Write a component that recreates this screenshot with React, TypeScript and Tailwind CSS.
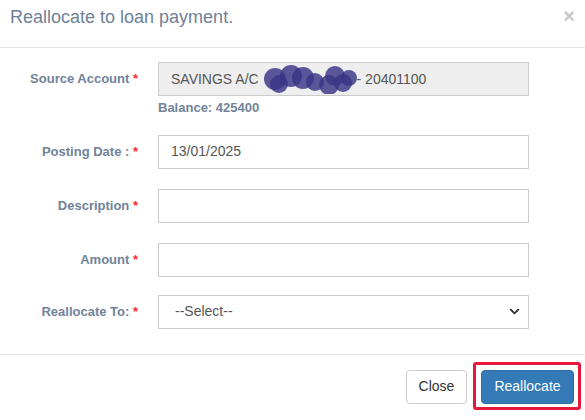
import React from 'react';
import { ChevronDown } from 'lucide-react';

const font = { fontFamily: '"Liberation Sans", Arial, sans-serif' };

function Label({ text }: { text: string }) {
  return (
    <div className="w-[158px] shrink-0 pr-[20px] text-right text-[13px] font-bold text-[#70839a]">
      {text} <span className="text-[#ff2b2b]">*</span>
    </div>
  );
}

function Scribble() {
  return (
    <svg width="94" height="30" viewBox="0 0 94 30" className="inline-block align-middle -my-2">
      <g fill="#3a3586" fillOpacity="0.82">
        <circle cx="12" cy="15" r="11" />
        <circle cx="16" cy="20" r="9" />
        <circle cx="28" cy="12" r="11" />
        <circle cx="40" cy="14" r="11" />
        <circle cx="52" cy="18" r="9" />
        <circle cx="66" cy="21" r="10" />
        <circle cx="72" cy="12" r="10" />
        <circle cx="80" cy="19" r="9" />
        <circle cx="86" cy="14" r="8" />
      </g>
    </svg>
  );
}

export default function App() {
  return (
    <div className="w-[585px] h-[420px] bg-white overflow-hidden" style={font}>
      <div className="h-[48px] border-b border-[#e5e5e5] flex items-center justify-between pl-[10px] pr-[10px]">
        <h4 className="text-[18px] text-[#6f8196] -mt-[13px]">Reallocate to loan payment.</h4>
        <span className="text-[20px] font-bold text-[#c8c8c8] -mt-[16px]">×</span>
      </div>

      <div className="pt-[14px]">
        <div className="flex">
          <div className="h-[34px] flex items-center justify-end">
            <Label text="Source Account" />
          </div>
          <div>
            <div className="w-[371px] h-[34px] border border-[#cccccc] bg-[#eeeeee] px-[12px] flex items-center text-[14px] text-[#555555] whitespace-nowrap">
              SAVINGS A/C&nbsp;<Scribble />- 20401100
            </div>
            <div className="mt-[2px] text-[13px] font-bold text-[#70839a]">Balance: 425400</div>
          </div>
        </div>

        <div className="flex items-center mt-[17px]">
          <div className="w-[158px] shrink-0 pr-[20px] text-right text-[13px] font-bold text-[#70839a]">
            Posting Date : <span className="text-[#ff2b2b]">*</span>
          </div>
          <div className="w-[371px] h-[34px] border border-[#cccccc] px-[12px] flex items-center text-[14px] text-[#555555]">
            13/01/2025
          </div>
        </div>

        <div className="flex items-center mt-[20px]">
          <Label text="Description" />
          <div className="w-[371px] h-[34px] border border-[#cccccc]" />
        </div>

        <div className="flex items-center mt-[20px]">
          <Label text="Amount" />
          <div className="w-[371px] h-[34px] border border-[#cccccc]" />
        </div>

        <div className="flex items-center mt-[18px]">
          <div className="w-[158px] shrink-0 pr-[20px] text-right text-[13px] font-bold text-[#70839a]">
            Reallocate To: <span className="text-[#ff2b2b]">*</span>
          </div>
          <div className="w-[371px] h-[34px] border border-[#cccccc] pl-[16px] pr-[6px] flex items-center justify-between text-[14px] text-[#555555]">
            <span>--Select--</span>
            <ChevronDown size={15} strokeWidth={3} className="text-[#333]" />
          </div>
        </div>
      </div>

      <div className="mt-[25px] border-t border-[#e5e5e5] pt-[15px] pr-[11px] flex justify-end gap-[14px]">
        <button className="w-[61px] h-[34px] rounded-[4px] border border-[#cccccc] bg-white text-[14px] text-[#333333]">
          Close
        </button>
        <div className="relative">
          <button className="w-[93px] h-[34px] rounded-[4px] border border-[#2e6da4] bg-[#337ab7] text-[14px] text-white">
            Reallocate
          </button>
          <span className="absolute left-[-8px] top-[-8px] right-[-7px] bottom-[-6px] border-[3px] border-[#e3183a] rounded-[3px] pointer-events-none" />
        </div>
      </div>
    </div>
  );
}
